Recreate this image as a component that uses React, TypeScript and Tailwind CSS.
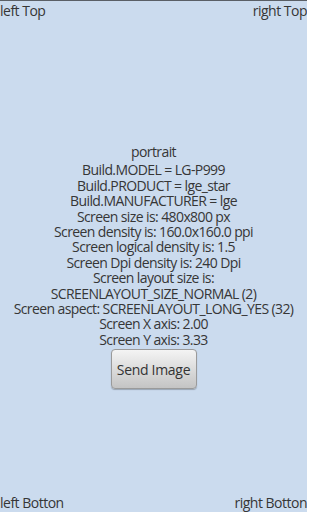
const lines = [
  "Build.MODEL = LG-P999",
  "Build.PRODUCT = lge_star",
  "Build.MANUFACTURER = lge",
  "Screen size is: 480x800 px",
  "Screen density is: 160.0x160.0 ppi",
  "Screen logical density is: 1.5",
  "Screen Dpi density is: 240 Dpi",
  "Screen layout size is:",
  "SCREENLAYOUT_SIZE_NORMAL (2)",
  "Screen aspect: SCREENLAYOUT_LONG_YES (32)",
  "Screen X axis: 2.00",
  "Screen Y axis: 3.33",
];

export default function App() {
  return (
    <div
      className="flex h-[512px] w-[307px] flex-col overflow-hidden border-t border-[#5a5f66] bg-[#cbdbee] text-[#363636]"
      style={{ fontFamily: '"Open Sans", "Noto Sans", sans-serif' }}
    >
      <div className="flex h-[19px] shrink-0 items-center justify-between text-[14px] leading-none tracking-[-0.5px]">
        <span>left Top</span>
        <span>right Top</span>
      </div>

      <div className="flex flex-1 flex-col items-center pt-[124px] text-center text-[14px] leading-[15.4px] tracking-[-0.6px]">
        <div className="mb-[3px]">portrait</div>
        {lines.map((line) => (
          <div key={line}>{line}</div>
        ))}
        <button className="mt-[2px] h-[40px] w-[86px] rounded-[4px] border border-[#9a9a9a] bg-gradient-to-b from-[#f4f4f4] to-[#c4c4c4] text-[14px] tracking-[-0.3px] text-[#333] shadow-[0_1px_1px_rgba(0,0,0,0.25)]">
          Send Image
        </button>
      </div>

      <div className="flex h-[18px] shrink-0 items-center justify-between text-[14px] leading-none tracking-[-0.5px]">
        <span>left Botton</span>
        <span>right Botton</span>
      </div>
    </div>
  );
}
